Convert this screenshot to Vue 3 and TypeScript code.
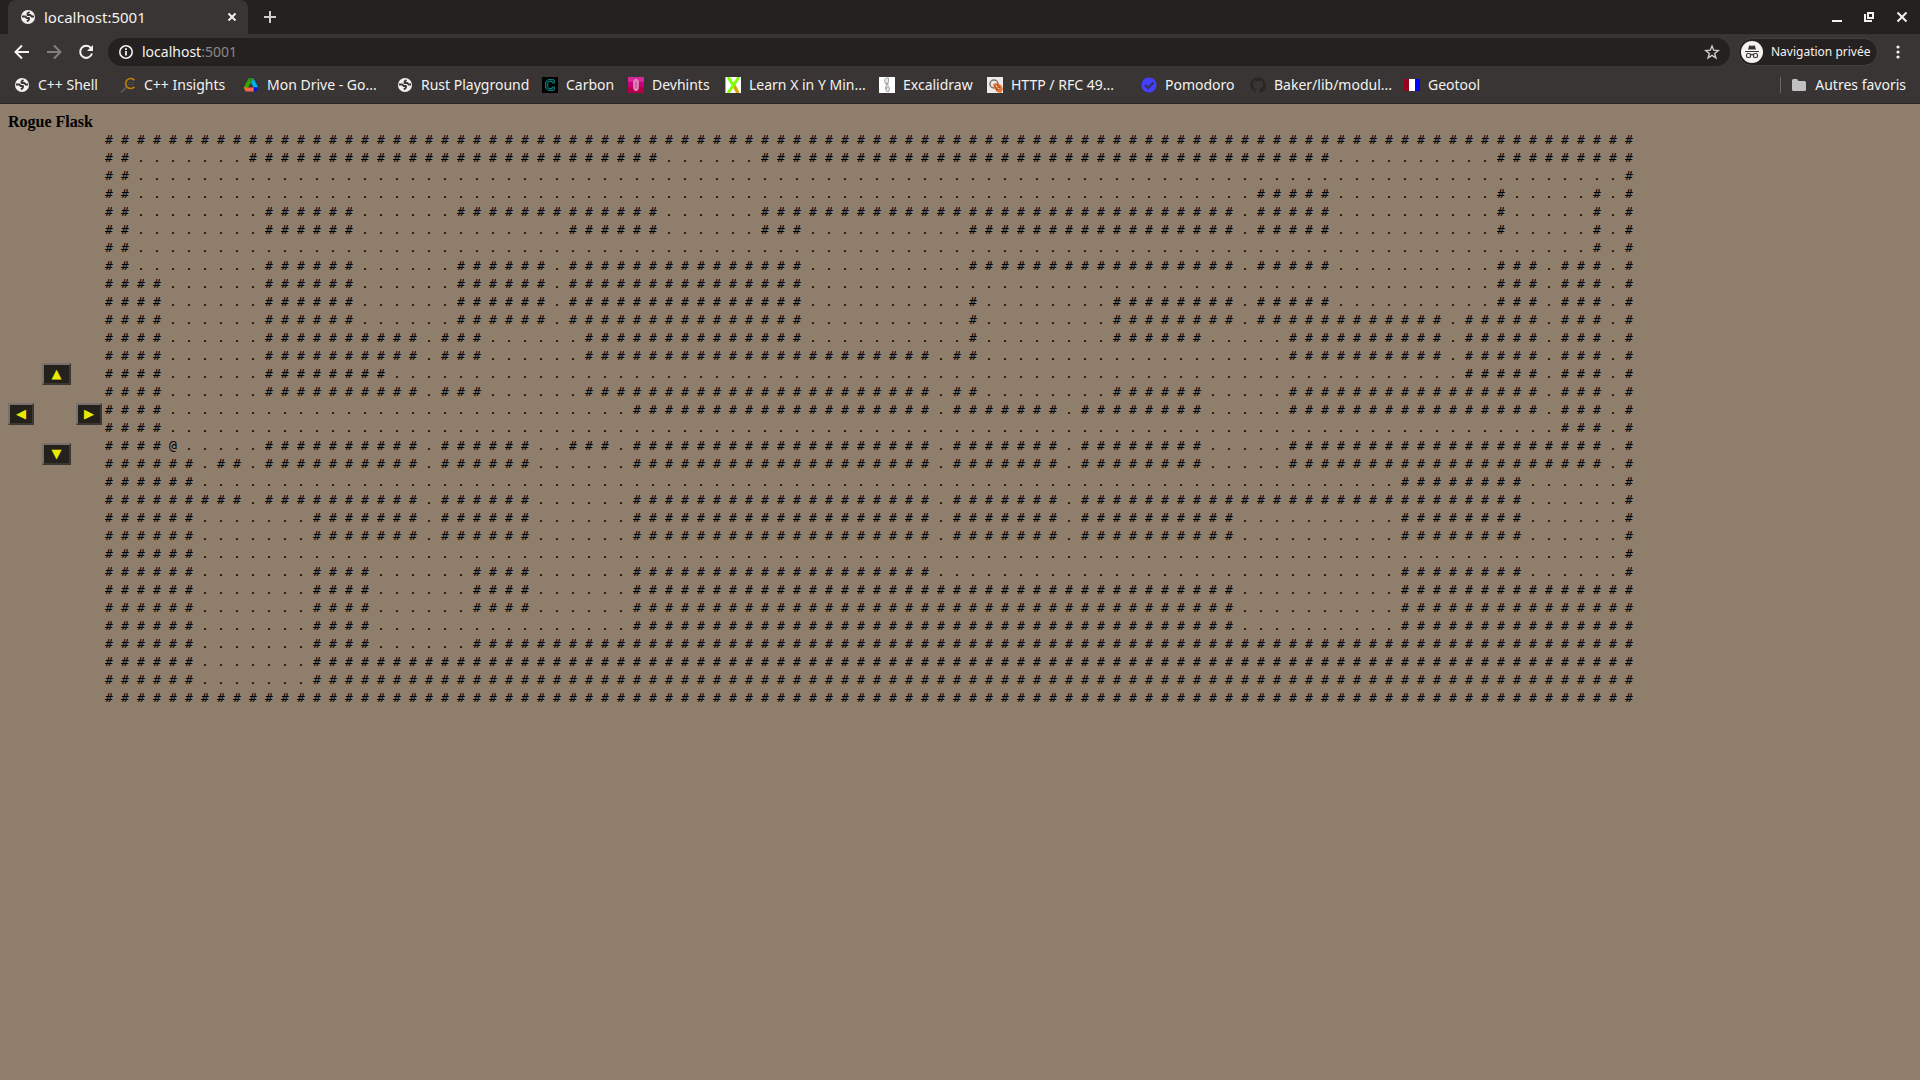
<script setup lang="ts">
import { ref } from 'vue'

type Run = [number, number]

interface Bookmark {
  icon: string
  label: string
  width: number
}

const COLUMNS = 96

const bookmarks: Bookmark[] = [
  { icon: 'globe', label: 'C++ Shell', width: 106 },
  { icon: 'insights', label: 'C++ Insights', width: 123 },
  { icon: 'drive', label: 'Mon Drive - Go...', width: 154 },
  { icon: 'globe', label: 'Rust Playground', width: 145 },
  { icon: 'carbon', label: 'Carbon', width: 86 },
  { icon: 'devhints', label: 'Devhints', width: 97 },
  { icon: 'learn', label: 'Learn X in Y Min...', width: 154 },
  { icon: 'excalidraw', label: 'Excalidraw', width: 108 },
  { icon: 'http', label: 'HTTP / RFC 49...', width: 154 },
  { icon: 'pomodoro', label: 'Pomodoro', width: 109 },
  { icon: 'github', label: 'Baker/lib/modul...', width: 154 },
  { icon: 'flag', label: 'Geotool', width: 82 },
]

// Wall runs of each dungeon row, as inclusive column ranges.
const walls: Run[][] = [
  [[0, 95]],
  [[0, 1], [9, 34], [41, 76], [87, 95]],
  [[0, 1], [95, 95]],
  [[0, 1], [72, 76], [87, 87], [93, 93], [95, 95]],
  [[0, 1], [10, 15], [22, 34], [41, 70], [72, 76], [87, 87], [93, 93], [95, 95]],
  [[0, 1], [10, 15], [29, 34], [41, 43], [54, 70], [72, 76], [87, 87], [93, 93], [95, 95]],
  [[0, 1], [93, 93], [95, 95]],
  [[0, 1], [10, 15], [22, 27], [29, 43], [54, 70], [72, 76], [87, 89], [91, 93], [95, 95]],
  [[0, 3], [10, 15], [22, 27], [29, 43], [87, 89], [91, 93], [95, 95]],
  [[0, 3], [10, 15], [22, 27], [29, 43], [54, 54], [63, 70], [72, 76], [87, 89], [91, 93], [95, 95]],
  [[0, 3], [10, 15], [22, 27], [29, 43], [54, 54], [63, 70], [72, 83], [85, 89], [91, 93], [95, 95]],
  [[0, 3], [10, 19], [21, 23], [30, 43], [54, 54], [63, 68], [74, 83], [85, 89], [91, 93], [95, 95]],
  [[0, 3], [10, 19], [21, 23], [30, 51], [53, 54], [74, 83], [85, 89], [91, 93], [95, 95]],
  [[0, 3], [10, 17], [85, 89], [91, 93], [95, 95]],
  [[0, 3], [10, 19], [21, 23], [30, 51], [53, 54], [63, 68], [74, 89], [91, 93], [95, 95]],
  [[0, 3], [33, 51], [53, 59], [61, 68], [74, 89], [91, 93], [95, 95]],
  [[0, 3], [91, 93], [95, 95]],
  [[0, 3], [10, 19], [21, 26], [29, 31], [33, 51], [53, 59], [61, 68], [74, 93], [95, 95]],
  [[0, 5], [7, 8], [10, 19], [21, 26], [33, 51], [53, 59], [61, 68], [74, 93], [95, 95]],
  [[0, 5], [81, 88], [95, 95]],
  [[0, 8], [10, 19], [21, 26], [33, 51], [53, 59], [61, 88], [95, 95]],
  [[0, 5], [13, 19], [21, 26], [33, 51], [53, 59], [61, 70], [81, 88], [95, 95]],
  [[0, 5], [13, 19], [21, 26], [33, 51], [53, 59], [61, 70], [81, 88], [95, 95]],
  [[0, 5], [95, 95]],
  [[0, 5], [13, 16], [23, 26], [33, 51], [81, 88], [95, 95]],
  [[0, 5], [13, 16], [23, 26], [33, 70], [81, 95]],
  [[0, 5], [13, 16], [23, 26], [33, 70], [81, 95]],
  [[0, 5], [13, 16], [33, 70], [81, 95]],
  [[0, 5], [13, 16], [23, 95]],
  [[0, 5], [13, 95]],
  [[0, 5], [13, 95]],
  [[0, 95]],
]

const player = ref({ row: 17, column: 4 })

function isWall(row: number, column: number): boolean {
  return walls[row].some(([from, to]) => column >= from && column <= to)
}

function tile(row: number, column: number): string {
  if (row === player.value.row && column === player.value.column) return '@'
  return isWall(row, column) ? '#' : '.'
}

function move(rows: number, columns: number): void {
  const row = player.value.row + rows
  const column = player.value.column + columns
  if (!isWall(row, column)) player.value = { row, column }
}
</script>

<template>
  <div class="window">
    <header class="browser">
      <div class="tabs">
        <div class="tab">
          <svg class="icon" viewBox="0 0 16 16"><circle cx="8" cy="8" r="7" fill="#f3f2f1" /><path d="M2 7.500h3.500l1 1.500h2.500v1.500L7 12.500M9.500 3L7.500 4.500v1.500h3l1 1.500h2.500" fill="none" stroke="#393534" stroke-width="1.800" stroke-linejoin="round" /></svg>
          <span class="tab-title">localhost:5001</span>
          <button class="plain" aria-label="Fermer l'onglet">
            <svg class="icon" viewBox="0 0 16 16"><path d="M4.500 4.500l7 7M11.500 4.500l-7 7" stroke="#f3f2f1" stroke-width="2" /></svg>
          </button>
        </div>
        <button class="plain new-tab" aria-label="Nouvel onglet">
          <svg class="icon" viewBox="0 0 16 16"><path d="M8 2v12M2 8h12" stroke="#cfcdcb" stroke-width="2" /></svg>
        </button>
        <div class="window-buttons">
          <button class="plain" aria-label="Réduire"><svg class="icon" viewBox="0 0 16 16"><path d="M2 12h10" stroke="#f3f2f1" stroke-width="2" /></svg></button>
          <button class="plain" aria-label="Restaurer"><svg class="icon" viewBox="0 0 16 16"><path d="M6 4h5v5H6zM3 5v7h7" fill="none" stroke="#f3f2f1" stroke-width="2" /></svg></button>
          <button class="plain" aria-label="Fermer"><svg class="icon" viewBox="0 0 16 16"><path d="M3.500 3.500l9 9M12.500 3.500l-9 9" stroke="#f3f2f1" stroke-width="2" /></svg></button>
        </div>
      </div>

      <div class="toolbar">
        <button class="plain" aria-label="Précédent"><svg class="icon" viewBox="0 0 16 16"><path d="M15 8H2.500M8 1.500L1.500 8 8 14.500" fill="none" stroke="#f3f2f1" stroke-width="2" /></svg></button>
        <button class="plain" aria-label="Suivant" disabled><svg class="icon" viewBox="0 0 16 16"><path d="M1 8h12.500M8 1.500L14.500 8 8 14.500" fill="none" stroke="#827f7d" stroke-width="2" /></svg></button>
        <button class="plain" aria-label="Actualiser"><svg class="icon" viewBox="0 0 16 16"><path d="M13 4.200A6 6 0 1 0 14 9.500" fill="none" stroke="#f3f2f1" stroke-width="2" /><path d="M15 1v6H9z" fill="#f3f2f1" /></svg></button>
        <div class="omnibox">
          <svg class="icon" viewBox="0 0 16 16"><circle cx="8" cy="8" r="6.200" fill="none" stroke="#f3f2f1" stroke-width="1.600" /><path d="M8 7v4.500M8 4.200v1.800" stroke="#f3f2f1" stroke-width="1.800" /></svg>
          <a class="address" href="#">localhost<span class="port">:5001</span></a>
          <button class="plain" aria-label="Ajouter aux favoris"><svg class="icon" viewBox="0 0 16 16"><path d="M8 2l1.700 4.200 4.500.300-3.500 2.900 1.200 4.500L8 11.400l-3.900 2.500 1.200-4.500L1.800 6.500l4.500-.300z" fill="none" stroke="#cfcdcb" stroke-width="1.400" /></svg></button>
        </div>
        <div class="private">
          <svg class="private-icon" viewBox="0 0 22 22"><circle cx="11" cy="11" r="11" fill="#f3f2f1" /><path d="M7 8.500L8.200 4.500h1.500l1.300.600 1.300-.600h1.500L15 8.500z" fill="#393534" /><path d="M4 10.500h14" stroke="#393534" /><g fill="none" stroke="#393534" stroke-width="1.200"><rect x="5.500" y="12.500" width="4" height="4" rx="1.600" /><rect x="12.500" y="12.500" width="4" height="4" rx="1.600" /><path d="M9.500 14c1-.700 2-.700 3 0" /></g></svg>
          <span>Navigation privée</span>
        </div>
        <button class="plain" aria-label="Menu"><svg class="icon" viewBox="0 0 16 16"><g fill="#f3f2f1"><circle cx="8" cy="3" r="1.600" /><circle cx="8" cy="8" r="1.600" /><circle cx="8" cy="13" r="1.600" /></g></svg></button>
      </div>

      <nav class="bookmarks">
        <a v-for="mark in bookmarks" :key="mark.label" class="bookmark" href="#" :style="{ width: mark.width + 'px' }">
          <svg class="icon" viewBox="0 0 16 16">
            <template v-if="mark.icon === 'globe'"><circle cx="8" cy="8" r="7" fill="#f3f2f1" /><path d="M2 7.500h3.500l1 1.500h2.500v1.500L7 12.500M9.500 3L7.500 4.500v1.500h3l1 1.500h2.500" fill="none" stroke="#393534" stroke-width="1.800" stroke-linejoin="round" /></template>
            <template v-else-if="mark.icon === 'insights'"><path d="M14.500 3.300A5 5 0 1 0 14.500 9.700" fill="none" stroke="#c27c00" stroke-width="1.700" /><path d="M8 5.500h6M8 7.500h6" stroke="#4c4846" /><path d="M6.500 10L1 15.500" stroke="#64605d" stroke-width="1.400" /></template>
            <template v-else-if="mark.icon === 'drive'"><path d="M5.700 1.500h4.600L4.500 11.500 3 14.500.700 10.500z" fill="#35a700" /><path d="M5.700 1.500h4.600l5 9h-4.600z" fill="#00b2f5" /><path d="M5.700 1.500h4.600L8 5.800z" fill="#2b8b00" /><path d="M5 10.500h6v4H2.700L.700 10.500z" fill="#ff6445" /><path d="M10.700 10.500h4.600L13 14.500h-2.300z" fill="#0014e8" /></template>
            <template v-else-if="mark.icon === 'carbon'"><path d="M0 0h16v16H0z" fill="#000" /><path d="M12.500 6V3.500L11 2.500H6L3.500 5v6L6 13.500h5l1.500-1V10h-2.500v1.500H6.500L5.800 10V6l.700-1.500H10V6z" fill="#012c2d" stroke="#087d7f" /></template>
            <template v-else-if="mark.icon === 'devhints'"><path d="M0 0h16v16H0z" fill="#b3004e" /><path d="M0 0h16v5H0z" fill="#d6289b" /><path d="M0 5h16v5H0z" fill="#c5007b" /><rect x="5.800" y="2.500" width="4.400" height="11" rx="2.200" fill="#df7bb0" stroke="#e39cc2" /><path d="M8 5v6" stroke="#b74f87" /></template>
            <template v-else-if="mark.icon === 'learn'"><path d="M0 0h16v16H0z" fill="#fff" /><path d="M0 0v16" stroke="#d9a800" stroke-width="2" /><path d="M9 8.500L13 16" stroke="#d9a800" stroke-width="3.500" /><path d="M3 0l5 8M14 0L3 16" stroke="#7fff00" stroke-width="3" /></template>
            <template v-else-if="mark.icon === 'excalidraw'"><path d="M0 0h16v16H0z" fill="#fff" /><path d="M5.500 2.500l1.500-1.500h2.500v4l-3 5 .500 4 2.500 1 1-3-1-3-3.500-3z" fill="#e6e6e6" stroke="#aaa" /><path d="M7 6l2.500 1M6.500 12l2-2" stroke="#888" /></template>
            <template v-else-if="mark.icon === 'http'"><path d="M0 0h16v16H0z" fill="#eceae8" /><circle cx="7" cy="7" r="4" fill="none" stroke="#77736f" stroke-width="1.500" /><path d="M6 7l3-1 5 2 2 4-2 4-4-1-3-4z" fill="#e8722e" /><path d="M7 9l5 4M10 7l3 4M9 13l4-3" stroke="#a84e1a" /><path d="M9 9l1 1m1 1l1 1" stroke="#fff" /></template>
            <template v-else-if="mark.icon === 'pomodoro'"><circle cx="8" cy="8" r="7.600" fill="#4540ff" /><path d="M4 8l3 3 5.500-5.500" fill="none" stroke="#353260" stroke-width="2.400" /></template>
            <template v-else-if="mark.icon === 'github'"><path d="M8 .200a8 8 0 0 0-2.500 15.500c.400.100.500-.200.500-.400v-1.500c-2.200.500-2.700-1-2.700-1-.400-.900-.900-1.200-.900-1.200-.700-.500.100-.500.100-.500.800.100 1.200.800 1.200.800.700 1.300 1.900.900 2.300.700.100-.500.300-.900.500-1.100-1.800-.200-3.600-.900-3.600-4 0-.900.300-1.600.800-2.100-.100-.200-.400-1 .100-2.100 0 0 .700-.200 2.200.800a7.500 7.500 0 0 1 4 0c1.500-1 2.200-.800 2.200-.800.400 1.100.200 1.900.100 2.100.500.600.800 1.300.8 2.100 0 3.100-1.900 3.800-3.700 4 .300.300.600.800.600 1.500v2.200c0 .200.100.500.600.400A8 8 0 0 0 8 .200z" fill="#292624" /></template>
            <template v-else><path d="M0 2h6v12H0z" fill="#96001f" /><path d="M5 2h6v12H5z" fill="#fff" /><path d="M11 2h5v12h-5z" fill="#00f" /></template>
          </svg>
          <span>{{ mark.label }}</span>
        </a>
        <a class="bookmark others" href="#">
          <svg class="icon" viewBox="0 0 16 16"><path d="M1 3.500q0-1.500 1.500-1.500H6l1.500 2h6Q15 4 15 5.500v7q0 1.500-1.500 1.500h-11Q1 14 1 12.500z" fill="#c1c0c0" /></svg>
          <span>Autres favoris</span>
        </a>
      </nav>
    </header>

    <main class="page">
      <h1 class="title">Rogue Flask</h1>
      <div class="game">
        <div class="controls">
          <button class="move up" aria-label="Haut" @click="move(-1, 0)">▲</button>
          <button class="move left" aria-label="Gauche" @click="move(0, -1)">◀</button>
          <button class="move right" aria-label="Droite" @click="move(0, 1)">▶</button>
          <button class="move down" aria-label="Bas" @click="move(1, 0)">▼</button>
        </div>
        <div class="board">
          <div v-for="(_, row) in walls" :key="row" class="row">
            <span v-for="column in COLUMNS" :key="column">{{ tile(row, column - 1) }}</span>
          </div>
        </div>
      </div>
    </main>
  </div>
</template>

<style>
body {
  background: #8f7e6c;
}
</style>

<style scoped>
.window {
  display: flex;
  flex-direction: column;
  min-height: 100vh;
}

.browser {
  background: #393534;
  border-bottom: 1px solid #2a2524;
  color: #f3f2f1;
  font-family: "Noto Sans", "Open Sans", sans-serif;
  font-size: 14px;
  line-height: 20px;
}

.icon {
  display: block;
  flex: none;
  width: 16px;
  height: 16px;
}

.plain {
  padding: 0;
  border: 0;
  background: none;
}

.tabs {
  display: flex;
  align-items: center;
  height: 34px;
  padding: 0 10px 0 8px;
  background: #252120;
}

.tab {
  display: flex;
  align-items: center;
  gap: 8px;
  box-sizing: border-box;
  width: 240px;
  height: 34px;
  padding: 0 8px 0 12px;
  border-radius: 8px 8px 0 0;
  background: #393534;
}

.tab-title {
  flex: 1;
  font-size: 15px;
}

.new-tab {
  margin-left: 14px;
}

.window-buttons {
  display: flex;
  gap: 16px;
  margin-left: auto;
}

.toolbar {
  display: flex;
  align-items: center;
  gap: 16px;
  height: 36px;
  padding: 0 14px;
}

.omnibox {
  display: flex;
  flex: 1;
  align-items: center;
  gap: 8px;
  height: 28px;
  margin-left: -2px;
  padding: 0 10px;
  border-radius: 14px;
  background: #252120;
}

.address {
  flex: 1;
  color: #f3f2f1;
  text-decoration: none;
}

.port {
  color: #8b8886;
}

.private {
  display: flex;
  align-items: center;
  gap: 8px;
  box-sizing: border-box;
  width: 140px;
  height: 28px;
  margin: 0 -4px 0 -8px;
  padding: 0 2px;
  border: 1px solid #444140;
  border-radius: 14px;
  background: #252120;
  font-size: 12px;
  white-space: nowrap;
}

.private-icon {
  flex: none;
  width: 22px;
  height: 22px;
}

.bookmarks {
  display: flex;
  align-items: center;
  height: 29px;
  padding: 0 14px 4px;
}

.bookmark {
  display: flex;
  flex: none;
  align-items: center;
  gap: 8px;
  color: #f3f2f1;
  text-decoration: none;
  white-space: nowrap;
}

.others {
  margin-left: auto;
  padding-left: 10px;
  border-left: 1px solid #6b6766;
  line-height: 16px;
}

.page {
  flex: 1;
  padding: 9px 8px 8px;
}

.title {
  margin: 0;
  font-family: "Liberation Serif", serif;
  font-size: 16px;
  line-height: 18px;
}

.game {
  display: flex;
}

.controls {
  display: grid;
  flex: none;
  grid-template-columns: 34px 34px 29px;
  grid-auto-rows: 22px;
  row-gap: 18px;
  align-content: start;
  justify-items: start;
  padding-top: 232px;
}

.move {
  width: 26px;
  height: 22px;
  padding: 0;
  border: 2px solid;
  border-color: #77736c #3b3834 #3b3834 #77736c;
  background: #24201b;
  color: #eaea00;
  font-family: "DejaVu Sans", sans-serif;
  font-size: 13px;
  line-height: 18px;
}

.up,
.down {
  grid-column: 2;
  width: 29px;
}

.left {
  grid-column: 1;
}

.right {
  grid-column: 3;
}

.board {
  color: #000;
  font-family: "DejaVu Sans Mono", monospace;
  font-size: 13px;
  line-height: 18px;
}

.row {
  display: grid;
  grid-template-columns: repeat(96, 16px);
}
</style>
